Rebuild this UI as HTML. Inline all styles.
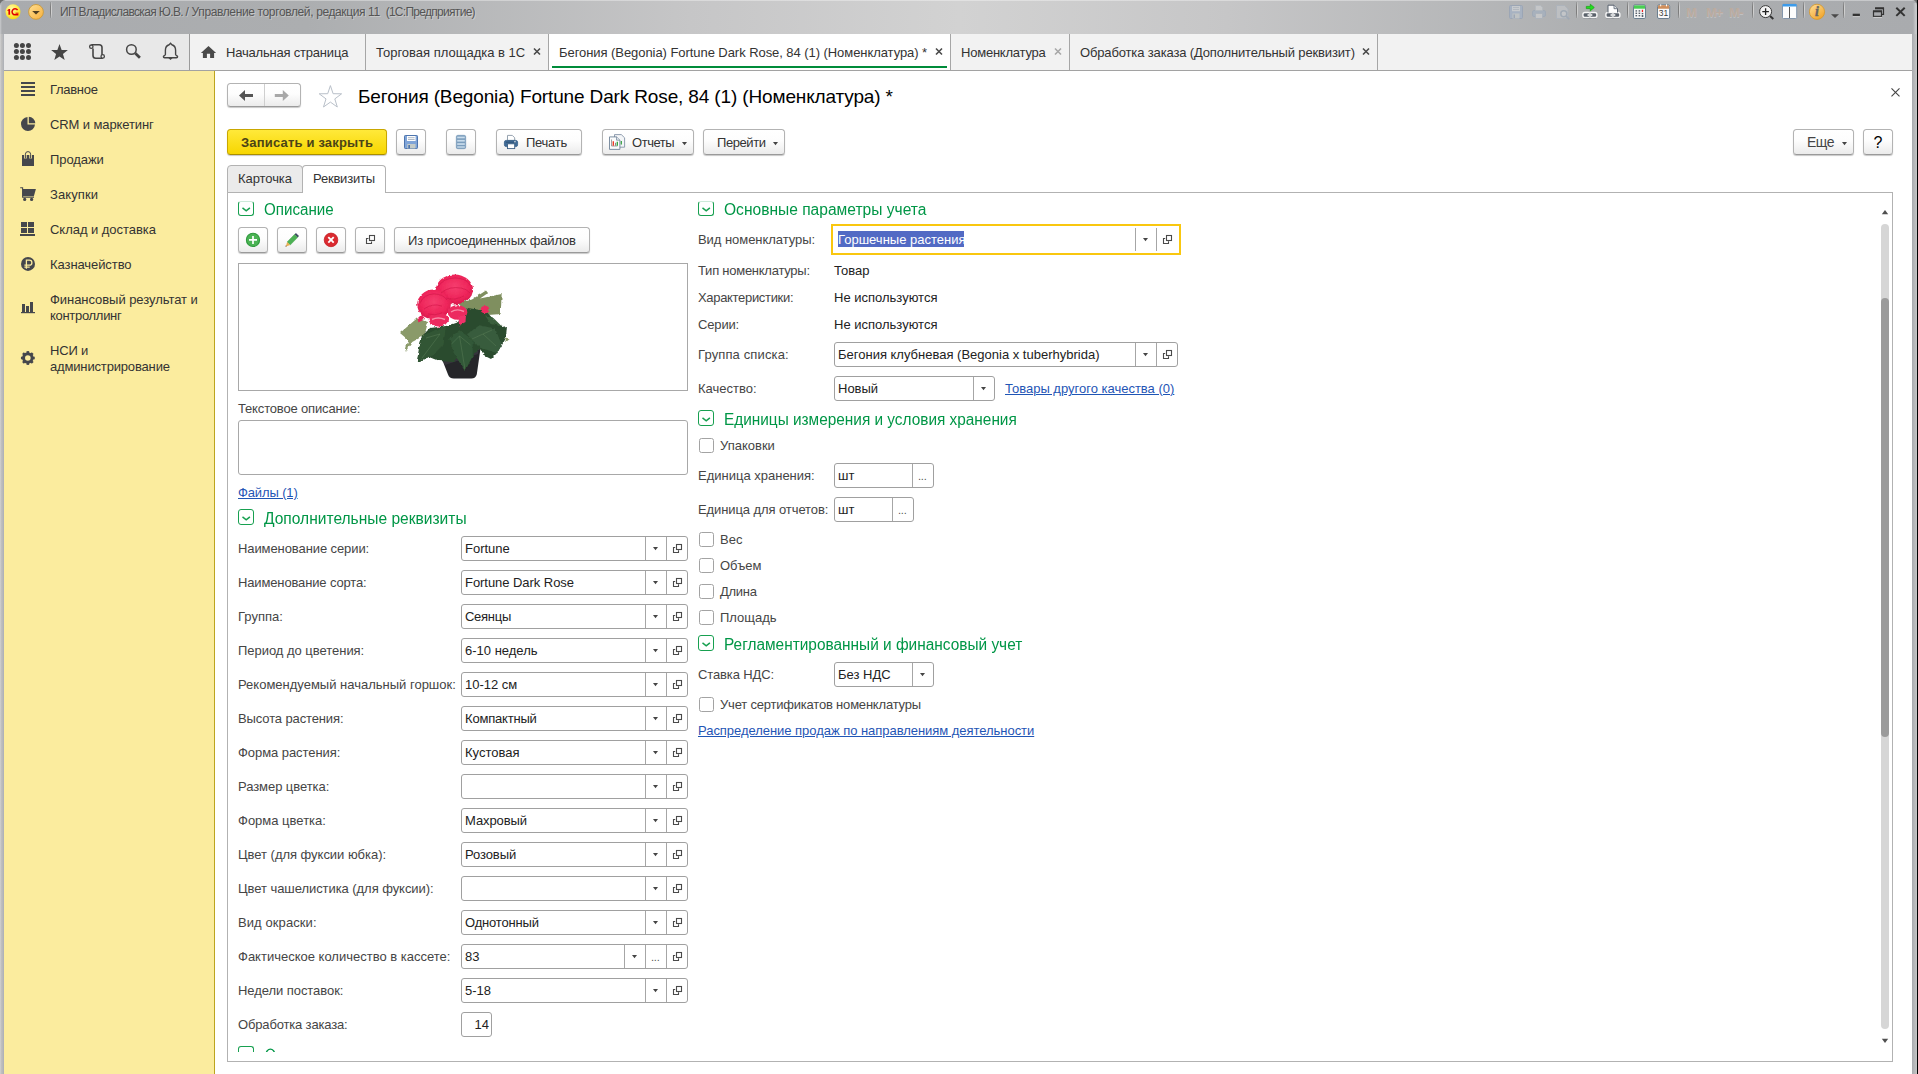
<!DOCTYPE html><html><head><meta charset="utf-8"><title>1C</title><style>
*{box-sizing:border-box;margin:0;padding:0}
html,body{width:1918px;height:1074px;overflow:hidden;background:#fff}
body{font-family:"Liberation Sans",sans-serif;font-size:13px;color:#333;position:relative}
.a{position:absolute}
svg{position:absolute;overflow:visible}
.t{position:absolute;white-space:nowrap;line-height:16px;height:16px}
#title{left:0;top:0;width:1918px;height:34px;background:linear-gradient(90deg,#a9abae 0%,#acaeb0 16%,#c6c6c7 36%,#d2d2d2 50%,#c6c6c7 64%,#acaeb0 84%,#a9abae 100%)}
#tabbar{left:4px;top:34px;width:1908px;height:36px;background:#f2f2f2}
#tools{left:4px;top:34px;width:185px;height:36px;background:#e8e8e8}
#side{left:4px;top:71px;width:210px;height:1003px;background:#fbec9e}
.lbl{color:#454545}
.val{color:#222}
.hd{color:#009646;font-size:16px;line-height:18px;height:18px;transform-origin:0 0}
.lnk{color:#1f55b5;text-decoration:underline}
.btn{position:absolute;border:1px solid #b3b3b3;border-bottom-color:#9a9a9a;border-radius:3.5px;background:linear-gradient(#ffffff 0%,#fdfdfd 45%,#ebebeb 100%);box-shadow:0 1px 1px rgba(0,0,0,.22)}
.fld{position:absolute;border:1px solid #a0a0a0;border-radius:3px;background:#fff;height:25px}
.fld i{position:absolute;top:0;width:1px;height:23px;background:#a6a6a6}
.cb{position:absolute;width:15px;height:15px;border:1px solid #a3a3a3;border-radius:2.5px;background:#fff}
.nav{font-size:13px;color:#333}
</style></head><body>
<div class="a" id="title"></div>
<div class="a" style="left:0;top:0;width:1918px;height:1px;background:rgba(255,255,255,.35)"></div>
<div class="t " style="left:60px;top:4px;font-size:12px;color:#555;text-shadow:1px 1px 0 rgba(255,255,255,.3)"><span style="letter-spacing:-0.657px">ИП Владиславская Ю.В. </span><span style="letter-spacing:-0.367px">/ Управление торговлей, </span><span style="letter-spacing:-0.39px">редакция 11&nbsp; </span><span style="letter-spacing:-0.71px">(1С:Предприятие)</span></div>
<svg style="left:4px;top:2px" width="44" height="20" viewBox="4 2 44 20" >
<defs><radialGradient id="g1" cx=".4" cy=".3" r=".8"><stop offset="0" stop-color="#fff9a8"/><stop offset=".6" stop-color="#ffe93a"/><stop offset="1" stop-color="#f3d400"/></radialGradient>
<linearGradient id="g2" x1="0" y1="0" x2="1" y2="1"><stop offset="0" stop-color="#ffdf92"/><stop offset="1" stop-color="#f7b03c"/></linearGradient></defs>
<circle cx="13" cy="11.8" r="7.5" fill="url(#g1)"/>
<path d="M7.3 10.2l1.6-1.2h1.2v5.8h-1.7v-4h-1.1z" fill="#e00000"/>
<path d="M18.4 14.8h-3.4a3 3 0 1 1 2.6-4.6" fill="none" stroke="#e00000" stroke-width="1.5"/>
<path d="M15.5 13.2h3" stroke="#e00000" stroke-width="1"/>
<circle cx="36" cy="11.9" r="7.4" fill="url(#g2)" stroke="#c9993a" stroke-width=".9"/>
<path d="M32.2 11h7.6l-3.8 3.6z" fill="#4f3f22"/>
</svg>
<div class="a" style="left:50px;top:2px;width:1px;height:16px;background:linear-gradient(rgba(110,110,110,.3),#7d7d7d 30%,#7d7d7d 70%,rgba(110,110,110,.3))"></div>
<div class="a" style="left:51px;top:2px;width:1px;height:16px;background:linear-gradient(rgba(220,220,220,.2),#cfcfcf 30%,#cfcfcf 70%,rgba(220,220,220,.2))"></div>
<div class="a" style="left:1576px;top:2px;width:1px;height:16px;background:linear-gradient(rgba(110,110,110,.3),#7d7d7d 30%,#7d7d7d 70%,rgba(110,110,110,.3))"></div>
<div class="a" style="left:1577px;top:2px;width:1px;height:16px;background:linear-gradient(rgba(220,220,220,.2),#cfcfcf 30%,#cfcfcf 70%,rgba(220,220,220,.2))"></div>
<div class="a" style="left:1627px;top:2px;width:1px;height:16px;background:linear-gradient(rgba(110,110,110,.3),#7d7d7d 30%,#7d7d7d 70%,rgba(110,110,110,.3))"></div>
<div class="a" style="left:1628px;top:2px;width:1px;height:16px;background:linear-gradient(rgba(220,220,220,.2),#cfcfcf 30%,#cfcfcf 70%,rgba(220,220,220,.2))"></div>
<div class="a" style="left:1678px;top:2px;width:1px;height:16px;background:linear-gradient(rgba(110,110,110,.3),#7d7d7d 30%,#7d7d7d 70%,rgba(110,110,110,.3))"></div>
<div class="a" style="left:1679px;top:2px;width:1px;height:16px;background:linear-gradient(rgba(220,220,220,.2),#cfcfcf 30%,#cfcfcf 70%,rgba(220,220,220,.2))"></div>
<div class="a" style="left:1752px;top:2px;width:1px;height:16px;background:linear-gradient(rgba(110,110,110,.3),#7d7d7d 30%,#7d7d7d 70%,rgba(110,110,110,.3))"></div>
<div class="a" style="left:1753px;top:2px;width:1px;height:16px;background:linear-gradient(rgba(220,220,220,.2),#cfcfcf 30%,#cfcfcf 70%,rgba(220,220,220,.2))"></div>
<div class="a" style="left:1803px;top:2px;width:1px;height:16px;background:linear-gradient(rgba(110,110,110,.3),#7d7d7d 30%,#7d7d7d 70%,rgba(110,110,110,.3))"></div>
<div class="a" style="left:1804px;top:2px;width:1px;height:16px;background:linear-gradient(rgba(220,220,220,.2),#cfcfcf 30%,#cfcfcf 70%,rgba(220,220,220,.2))"></div>
<div class="a" style="left:1843px;top:2px;width:1px;height:16px;background:linear-gradient(rgba(110,110,110,.3),#7d7d7d 30%,#7d7d7d 70%,rgba(110,110,110,.3))"></div>
<div class="a" style="left:1844px;top:2px;width:1px;height:16px;background:linear-gradient(rgba(220,220,220,.2),#cfcfcf 30%,#cfcfcf 70%,rgba(220,220,220,.2))"></div>
<svg style="left:1509px;top:5px" width="62" height="14" viewBox="1509 5 62 14" >
<g opacity=".55">
<rect x="1509.5" y="5.5" width="13" height="13" rx="1" fill="#9fb2cc" stroke="#8a9bb5"/>
<rect x="1512" y="6" width="8" height="5.2" fill="#d9dde2"/><path d="M1513 7.5h6M1513 9.5h6" stroke="#aab4c2" stroke-width=".8"/>
<rect x="1512.5" y="13.5" width="7" height="5" fill="#c9cfd0"/><rect x="1513.5" y="14.5" width="1.5" height="3.5" fill="#8a9bb5"/>
<rect x="1532.5" y="10.5" width="13" height="6" rx="1.5" fill="#9fb0c4" stroke="#93a3b8"/>
<path d="M1535.5 10.5v-5h5l2 2v3z" fill="#d6d8da" stroke="#b4bcc6" stroke-width=".8"/>
<rect x="1535.5" y="13.5" width="7" height="5" fill="#d6d8da" stroke="#a5b1c0" stroke-width=".8"/>
<path d="M1556.5 5.500h8l3.500 3.500v9.500h-11.500z" fill="#c9ccd0" stroke="#a9b4c3" stroke-width=".9"/>
<circle cx="1563.800" cy="13.700" r="3" fill="#d4d7da" stroke="#94a4b6" stroke-width="1.500"/>
<path d="M1566 16l3.300 3.300" stroke="#94a4b6" stroke-width="1.800"/>
</g></svg>
<svg style="left:1582px;top:4px" width="40" height="16" viewBox="1582 4 40 16" ><rect x="1582.9" y="12.500" width="7" height="5" rx="2" fill="#5b626b" stroke="#f6f6f6" stroke-width="1.400"/>
<rect x="1589.9" y="12.500" width="7" height="5" rx="2" fill="#5b626b" stroke="#f6f6f6" stroke-width="1.400"/>
<rect x="1587.2" y="14" width="5.400" height="2" rx=".8" fill="#fff" stroke="#5b626b" stroke-width=".5"/><path d="M1583.5 18.500h12.600" stroke="#70767d" stroke-width=".7" opacity=".6"/>
<path d="M1586.300 6.400h4v-2.200l4 3.300-4 3.300v-2.200h-4z" fill="#22e01e" stroke="#12a010" stroke-width=".7"/>
<rect x="1605.9" y="12.500" width="7" height="5" rx="2" fill="#5b626b" stroke="#f6f6f6" stroke-width="1.400"/>
<rect x="1612.9" y="12.500" width="7" height="5" rx="2" fill="#5b626b" stroke="#f6f6f6" stroke-width="1.400"/>
<rect x="1610.2" y="14" width="5.400" height="2" rx=".8" fill="#fff" stroke="#5b626b" stroke-width=".5"/><path d="M1606.5 18.500h12.600" stroke="#70767d" stroke-width=".7" opacity=".6"/>
<path d="M1608 12.500v-7.300h6l3.500 3.500v3.800" fill="#fdfdfd" stroke="#59626e" stroke-width="1"/><path d="M1614 5.200v3.500h3.500" fill="#dfe3e8" stroke="#59626e" stroke-width=".8"/>
</svg>
<svg style="left:1633px;top:4px" width="40" height="16" viewBox="1633 4 40 16" >
<rect x="1633.5" y="4.900" width="12" height="13.600" rx="1.300" fill="#f6f7f8" stroke="#6c7f90"/>
<rect x="1634" y="5.400" width="11" height="3.300" fill="#49cf52"/>
<g fill="#58606a"><rect x="1635.500" y="10.200" width="1.600" height="1.400"/><rect x="1638.600" y="10.200" width="1.600" height="1.400"/>
<rect x="1635.500" y="12.600" width="1.600" height="1.400"/><rect x="1638.600" y="12.600" width="1.600" height="1.400"/><rect x="1641.700" y="12.900" width="1.600" height="1.400"/>
<rect x="1635.500" y="15" width="1.600" height="1.400"/><rect x="1638.600" y="15" width="1.600" height="1.400"/><rect x="1641.700" y="15" width="1.600" height="2"/></g>
<rect x="1641.800" y="9.800" width="1.300" height="2.200" fill="#f02020"/>
<rect x="1657.500" y="4.900" width="12.200" height="13.600" rx="1.500" fill="#fbfbfc" stroke="#6c7f90"/>
<path d="M1658 8.800v-2.400a1.200 1.200 0 0 1 1.200-1.200h8.800a1.200 1.200 0 0 1 1.200 1.200v2.400z" fill="#cf8e5c"/>
<path d="M1660.700 4.300v2M1666.500 4.300v2" stroke="#fff" stroke-width="1"/>
<text x="1663.600" y="16.400" font-family="Liberation Sans" font-size="8.500" text-anchor="middle" fill="#3d3d3d">31</text>
</svg>
<div class="t " style="left:1686px;top:5px;font-size:13px;font-weight:bold;color:#bbab9f;letter-spacing:-0.5px;text-shadow:0 1px 0 rgba(255,255,255,.25)">M</div>
<div class="t " style="left:1706px;top:5px;font-size:13px;font-weight:bold;color:#bbab9f;letter-spacing:-1px;text-shadow:0 1px 0 rgba(255,255,255,.25)">M+</div>
<div class="t " style="left:1729px;top:5px;font-size:13px;font-weight:bold;color:#bbab9f;letter-spacing:-0.5px;text-shadow:0 1px 0 rgba(255,255,255,.25)">M-</div>
<svg style="left:1758px;top:3px" width="90" height="18" viewBox="1758 3 90 18" >
<defs><linearGradient id="g3" x1="0" y1="0" x2=".7" y2="1"><stop offset="0" stop-color="#ffe09a"/><stop offset="1" stop-color="#f1a52c"/></linearGradient></defs>
<path d="M1770 16l3.300 3" stroke="#333" stroke-width="2"/>
<circle cx="1765.600" cy="11.600" r="6" fill="#f4f4f4" stroke="#3a3a3a" stroke-width="1"/>
<path d="M1762.300 11.600h6.600M1765.600 8.300v6.600" stroke="#222" stroke-width="1.300"/>
<rect x="1782.500" y="4.300" width="14.200" height="14.200" rx="1" fill="#fcfcfc" stroke="#7a8fa6" stroke-width=".9"/>
<path d="M1782.500 6.600v-1.600a1 1 0 0 1 1-1h12.200a1 1 0 0 1 1 1v1.600z" fill="#3d9bea"/>
<path d="M1789.500 7v11" stroke="#555" stroke-width="1"/>
<circle cx="1817" cy="11.800" r="7.600" fill="url(#g3)" stroke="#d49a34" stroke-width=".9"/>
<text x="1817" y="16.400" font-family="Liberation Serif" font-style="italic" font-weight="bold" font-size="14" text-anchor="middle" fill="#666" stroke="#666" stroke-width=".4">i</text>
<path d="M1831 14.300h8l-4 3.600z" fill="#4a4a4a"/>
</svg>
<svg style="left:1850px;top:5px" width="60" height="14" viewBox="1850 5 60 14" >
<rect x="1852.700" y="13.700" width="7.200" height="2.400" fill="#333"/><rect x="1852.700" y="16.100" width="7.200" height="1" fill="#d8d8d8" opacity=".7"/>
<path d="M1875.500 8.400h8v6h-1.800" fill="none" stroke="#333" stroke-width="1.200"/><path d="M1875 8.300h9" stroke="#333" stroke-width="2"/>
<rect x="1873.500" y="11.400" width="8" height="5" fill="none" stroke="#333" stroke-width="1.200"/><path d="M1873 11.300h9" stroke="#333" stroke-width="2"/>
<path d="M1873.500 17.400h8.500" stroke="#e0e0e0" stroke-width=".9" opacity=".8"/>
<path d="M1896.300 7.700l8.400 8.200M1904.700 7.700l-8.400 8.200" stroke="#333" stroke-width="2"/>
</svg>
<div class="a" style="left:1913px;top:3px;width:4px;height:31px;background:linear-gradient(90deg,rgba(200,201,203,0),rgba(200,201,203,.9) 60%,rgba(200,201,203,.9))"></div>
<div class="a" style="left:0;top:3px;width:2px;height:31px;background:linear-gradient(90deg,rgba(205,206,208,.9),rgba(205,206,208,0))"></div>
<svg style="left:0px;top:0px" width="6" height="6" viewBox="0 0 6 6" ><path d="M0 0h5.500a5.500 5.500 0 0 0-5.500 5.500z" fill="#6e6e6e"/></svg>
<svg style="left:1911px;top:0px" width="7" height="6" viewBox="1911 0 7 6" ><path d="M1917 0h-5a5 5 0 0 1 5 5z" fill="#6e6e6e"/></svg>
<div class="a" id="tabbar"></div><div class="a" id="tools"></div>
<div class="a" style="left:189px;top:34px;width:1px;height:37px;background:#9b9b9b"></div>
<div class="a" style="left:365px;top:34px;width:1px;height:36px;background:#a6a6a6"></div>
<div class="a" style="left:548px;top:34px;width:1px;height:36px;background:#a6a6a6"></div>
<div class="a" style="left:950px;top:34px;width:1px;height:36px;background:#a6a6a6"></div>
<div class="a" style="left:1069px;top:34px;width:1px;height:36px;background:#a6a6a6"></div>
<div class="a" style="left:1377px;top:34px;width:1px;height:36px;background:#a6a6a6"></div>
<div class="a" style="left:549px;top:34px;width:401px;height:36px;background:#fff"></div>
<div class="a" style="left:552px;top:66px;width:395px;height:2px;background:#008c3a"></div>
<div class="a" style="left:4px;top:70px;width:1908px;height:1px;background:#a2a2a2"></div>
<div class="t " style="left:226px;top:45px;letter-spacing:-0.2px;color:#333">Начальная страница</div>
<div class="t " style="left:376px;top:45px;color:#333">Торговая площадка в 1С</div>
<div class="t " style="left:559px;top:45px;letter-spacing:-0.06px;color:#333">Бегония (Begonia) Fortune Dark Rose, 84 (1) (Номенклатура) *</div>
<div class="t " style="left:961px;top:45px;color:#333;letter-spacing:-0.22px">Номенклатура</div>
<div class="t " style="left:1080px;top:45px;color:#333;letter-spacing:-0.145px">Обработка заказа (Дополнительный реквизит)</div>
<svg style="left:531.5px;top:47px" width="10" height="10" viewBox="531.5 47 10 10" ><path d="M533.5 48.500l6 6M539.5 48.500l-6 6" stroke="#4a4a4a" stroke-width="1.600"/></svg>
<svg style="left:933.5px;top:47px" width="10" height="10" viewBox="933.5 47 10 10" ><path d="M935.5 48.500l6 6M941.5 48.500l-6 6" stroke="#4a4a4a" stroke-width="1.600"/></svg>
<svg style="left:1052.5px;top:47px" width="10" height="10" viewBox="1052.5 47 10 10" ><path d="M1054.5 48.500l6 6M1060.5 48.500l-6 6" stroke="#a8a8a8" stroke-width="1.600"/></svg>
<svg style="left:1360.5px;top:47px" width="10" height="10" viewBox="1360.5 47 10 10" ><path d="M1362.5 48.500l6 6M1368.5 48.500l-6 6" stroke="#4a4a4a" stroke-width="1.600"/></svg>
<svg style="left:12px;top:42px" width="180" height="20" viewBox="12 42 180 20" ><g fill="#454545"><circle cx="16.4" cy="45.6" r="2.500"/><circle cx="16.4" cy="51.6" r="2.500"/><circle cx="16.4" cy="57.6" r="2.500"/><circle cx="22.4" cy="45.6" r="2.500"/><circle cx="22.4" cy="51.6" r="2.500"/><circle cx="22.4" cy="57.6" r="2.500"/><circle cx="28.5" cy="45.6" r="2.500"/><circle cx="28.5" cy="51.6" r="2.500"/><circle cx="28.5" cy="57.6" r="2.500"/></g>
<path d="M59.500 44l2.150 5.900 6.250.200-4.950 3.850 1.750 6.050-5.200-3.500-5.200 3.500 1.750-6.050-4.950-3.850 6.250-.200z" fill="#454545"/>
<path d="M91.400 44.700h7.800a2.800 2.800 0 0 1 2.800 2.800v7.200M93 48.500v7a2.800 2.800 0 0 0 2.800 2.800h7" fill="none" stroke="#454545" stroke-width="1.600"/>
<circle cx="91.300" cy="46.700" r="1.700" fill="#e8e8e8" stroke="#454545" stroke-width="1.300"/><circle cx="102.700" cy="56.400" r="1.700" fill="#e8e8e8" stroke="#454545" stroke-width="1.300"/>
<circle cx="131.400" cy="49.500" r="4.800" fill="none" stroke="#454545" stroke-width="1.500"/><path d="M135.300 53.300l4.600 4.400" stroke="#454545" stroke-width="2.800"/>
<path d="M170.500 43.200l1.300 1.500c2.600.700 3.800 2.900 3.800 5.500v4.300c0 1 2 1.300 2 2.300 0 .600-.500.900-1.200.900h-11.800c-.700 0-1.200-.300-1.200-.900 0-1 2-1.300 2-2.300v-4.300c0-2.600 1.200-4.800 3.800-5.500z" fill="none" stroke="#454545" stroke-width="1.400"/>
<path d="M168.400 58l2.100 2 2.100-2z" fill="#454545"/>
</svg>
<svg style="left:200px;top:45px" width="17" height="14" viewBox="200 45 17 14" ><path d="M208.500 45.900l7.600 7.100h-2v5.100h-4v-4.300h-3.200v4.300h-4v-5.100h-2z" fill="#4a4a4a"/></svg>
<div class="a" id="side"></div>
<div class="a" style="left:214px;top:71px;width:1px;height:1003px;background:#bca41f"></div>
<div class="t nav" style="left:50px;top:82px;height:auto"><span style="letter-spacing:-0.3px">Главное</span></div>
<div class="t nav" style="left:50px;top:117px;height:auto"><span style="letter-spacing:-0.1px">CRM и маркетинг</span></div>
<div class="t nav" style="left:50px;top:152px;height:auto"><span style="letter-spacing:-0.09px">Продажи</span></div>
<div class="t nav" style="left:50px;top:187px;height:auto"><span style="letter-spacing:0.09px">Закупки</span></div>
<div class="t nav" style="left:50px;top:222px;height:auto"><span style="letter-spacing:-0.04px">Склад и доставка</span></div>
<div class="t nav" style="left:50px;top:257px;height:auto"><span style="letter-spacing:-0.08px">Казначейство</span></div>
<div class="t nav" style="left:50px;top:292px;height:auto"><span style="letter-spacing:-0.05px">Финансовый результат и</span><br><span style="letter-spacing:-0.3px">контроллинг</span></div>
<div class="t nav" style="left:50px;top:343px;height:auto"><span style="letter-spacing:-0.2px">НСИ и</span><br><span style="letter-spacing:-0.16px">администрирование</span></div>
<svg style="left:20px;top:80px" width="16" height="290" viewBox="20 80 16 290" ><g fill="#45474c">
<rect x="21" y="82" width="14" height="2"/><rect x="21" y="86" width="14" height="2"/><rect x="21" y="90" width="14" height="2"/><rect x="21" y="94" width="14" height="2"/>
<path d="M27.500 117v7.500h7.500a7 7 0 1 1-7.500-7.500z"/><path d="M28.800 116.700a6.700 6.700 0 0 1 6.500 6.500h-6.500z"/>
<rect x="22" y="155" width="12" height="11"/>
<rect x="21" y="222" width="6" height="5"/><rect x="28" y="222" width="6" height="5"/><rect x="21" y="228" width="6" height="5"/><rect x="28" y="228" width="6" height="5"/><rect x="20" y="234" width="15" height="2"/>
<circle cx="28" cy="263.900" r="7"/>
<rect x="22" y="304" width="3" height="9"/><rect x="26" y="306" width="3" height="7"/><rect x="30" y="302" width="3" height="11"/><rect x="21" y="312" width="14" height="1.200"/>
<path d="M35.900 189h-13.300v7h11.300z"/><circle cx="24.700" cy="199.400" r="1.600"/><circle cx="31.600" cy="199.400" r="1.600"/>
</g>
<path d="M25.400 158.500v-4.300a2.600 2.600 0 0 1 5.200 0v4.300" fill="none" stroke="#fbec9e" stroke-width="2.600"/>
<path d="M25.400 158v-3.800a2.600 2.600 0 0 1 5.200 0v3.800" fill="none" stroke="#45474c" stroke-width="1" stroke-linecap="round"/>
<path d="M20.200 187.700h2.400v9.400h11.400" fill="none" stroke="#45474c" stroke-width="1.100"/>
<path d="M26.400 268.800v-8.600h3a2.500 2.500 0 0 1 0 5h-5M24.400 267.100h5.300" fill="none" stroke="#fbec9e" stroke-width="1.300"/>
<circle cx="27.850" cy="358" r="4.300" fill="none" stroke="#45474c" stroke-width="3"/>
<g stroke="#45474c" stroke-width="2.600"><path d="M27.850 351.100v2.500" transform="rotate(0 27.850 358)"/><path d="M27.850 351.100v2.500" transform="rotate(45 27.850 358)"/><path d="M27.850 351.100v2.500" transform="rotate(90 27.850 358)"/><path d="M27.850 351.100v2.500" transform="rotate(135 27.850 358)"/><path d="M27.850 351.100v2.500" transform="rotate(180 27.850 358)"/><path d="M27.850 351.100v2.500" transform="rotate(225 27.850 358)"/><path d="M27.850 351.100v2.500" transform="rotate(270 27.850 358)"/><path d="M27.850 351.100v2.500" transform="rotate(315 27.850 358)"/></g></svg>
<div class="t " style="left:358px;top:85px;font-size:19px;line-height:24px;height:24px;color:#000;letter-spacing:-0.14px">Бегония (Begonia) Fortune Dark Rose, 84 (1) (Номенклатура) *</div>
<div class="btn" style="left:227px;top:83px;width:74px;height:24px"></div>
<div class="a" style="left:264px;top:84px;width:1px;height:22px;background:#cfcfcf"></div>
<svg style="left:236px;top:88px" width="56" height="16" viewBox="236 88 56 16" ><path d="M239 95.500l6-5.500v4h8v3h-8v4z" fill="#555"/><path d="M288.800 95.500l-6-5.500v4h-8v3h8v4z" fill="#a8a8a8"/></svg>
<svg style="left:318px;top:84px" width="26" height="24" viewBox="318 84 26 24" ><path d="M330.400 85.600l2.700 8.100 8.500.100-6.800 5.100 2.500 8.100-6.900-4.900-6.900 4.900 2.500-8.100-6.800-5.100 8.500-.100z" fill="#fff" stroke="#b9c0c9" stroke-width="1"/></svg>
<svg style="left:1889px;top:87px" width="12" height="12" viewBox="1889 87 12 12" ><path d="M1891.500 88.300l8 8M1899.500 88.300l-8 8" stroke="#444" stroke-width="1.100"/></svg>
<div class="btn" style="left:227px;top:129px;width:160px;height:26px;border-color:#c9a700;border-bottom-color:#a98e00;background:linear-gradient(#ffe93a,#f7d600)"></div>
<div class="t " style="left:241px;top:135px;font-weight:bold;color:#4b4416;letter-spacing:0.18px">Записать и закрыть</div>
<div class="btn" style="left:396px;top:129px;width:30px;height:26px"></div>
<div class="btn" style="left:446px;top:129px;width:30px;height:26px"></div>
<div class="btn" style="left:496px;top:129px;width:86px;height:26px"></div>
<div class="btn" style="left:602px;top:129px;width:92px;height:26px"></div>
<div class="btn" style="left:703px;top:129px;width:82px;height:26px"></div>
<div class="btn" style="left:1793px;top:129px;width:61px;height:26px"></div>
<div class="btn" style="left:1863px;top:129px;width:30px;height:26px"></div>
<div class="t " style="left:526px;top:135px;letter-spacing:-0.27px">Печать</div>
<div class="t " style="left:632px;top:135px;letter-spacing:-0.47px">Отчеты</div>
<div class="t " style="left:717px;top:135px;letter-spacing:-0.43px">Перейти</div>
<div class="t " style="left:1807px;top:134px;font-size:14px;letter-spacing:-0.5px;color:#444">Еще</div>
<div class="t " style="left:1873.5px;top:134px;font-size:16px;color:#000;line-height:18px;height:18px">?</div>
<svg style="left:682px;top:142px" width="5" height="4" viewBox="682 142 5 4" ><path d="M682 142h5l-2.500 3.200z" fill="#444"/></svg>
<svg style="left:773px;top:142px" width="5" height="4" viewBox="773 142 5 4" ><path d="M773 142h5l-2.500 3.200z" fill="#444"/></svg>
<svg style="left:1842px;top:142px" width="5" height="4" viewBox="1842 142 5 4" ><path d="M1842 142h5l-2.500 3.200z" fill="#444"/></svg>
<svg style="left:404px;top:135px" width="14" height="14" viewBox="404 135 14 14" ><rect x="404.500" y="135.500" width="13" height="13" rx=".8" fill="#7fa4d8" stroke="#4d74ad"/>
<rect x="407" y="136" width="8.600" height="5" fill="#fdfdfd"/><path d="M408 137.700h6.600M408 139.500h6.600" stroke="#9aa7b8" stroke-width=".8"/>
<rect x="407.300" y="144" width="8.200" height="4.500" fill="#c4cbc8"/><rect x="408.300" y="145" width="1.700" height="3.500" fill="#4d74ad"/></svg>
<svg style="left:456px;top:135px" width="10" height="14" viewBox="456 135 10 14" ><rect x="456.300" y="135.300" width="9.400" height="13.400" rx="1.500" fill="#7b9dbd" stroke="#6f92b4" stroke-width=".6"/>
<g fill="#c9dcec"><rect x="457.200" y="136.600" width="7.600" height="1.700"/><rect x="457.200" y="139.900" width="7.600" height="1.700"/><rect x="457.200" y="143.200" width="7.600" height="1.700"/><rect x="457.200" y="146.300" width="7.600" height="1.400"/></g></svg>
<svg style="left:504px;top:135px" width="14" height="14" viewBox="504 135 14 14" ><path d="M507.500 140.500v-5.100h4.800l2.400 2.400v2.700z" fill="#fff" stroke="#8a97a6" stroke-width=".9"/>
<rect x="504.400" y="140.400" width="13.200" height="6.200" rx="1.800" fill="#3f6b97" stroke="#355d86" stroke-width=".8"/>
<path d="M506 142.200h10" stroke="#2c4f73" stroke-width=".9"/><rect x="514.200" y="141.300" width="1.500" height="1" fill="#fff"/>
<rect x="507.500" y="143.800" width="7.200" height="4.800" fill="#fff" stroke="#3c5f84" stroke-width=".9"/></svg>
<svg style="left:608px;top:134px" width="18" height="16" viewBox="608 134 18 16" ><path d="M614.500 134.600h6.800l3.300 3.200v9.400h-10.100z" fill="#f4f6f8" stroke="#8393a6" stroke-width=".9"/>
<path d="M621.300 141v3.500" stroke="#3aa544" stroke-width="1.300"/>
<path d="M609.500 136.900h7l3.400 3.300v9.200h-10.400z" fill="#fbfcfd" stroke="#6f8297" stroke-width=".9"/><path d="M616.500 136.900v3.300h3.400" fill="#dfe5ec" stroke="#6f8297" stroke-width=".7"/>
<path d="M611.500 139.500v6.500h6" fill="none" stroke="#8c8c8c" stroke-width=".8"/>
<path d="M613.300 141.200v4.500" stroke="#ee3a24" stroke-width="1.400"/><path d="M615.500 142.800v3" stroke="#888" stroke-width="1"/><path d="M617.300 141.800v4" stroke="#37a844" stroke-width="1.400"/></svg>
<div class="a" style="left:227px;top:192px;width:1666px;height:870px;border:1px solid #b2b2b2"></div>
<div class="a" style="left:227px;top:165px;width:76px;height:28px;border:1px solid #b2b2b2;border-radius:4px 4px 0 0;background:#ebebeb"></div>
<div class="a" style="left:302px;top:165px;width:84px;height:28px;border:1px solid #b2b2b2;border-bottom:none;border-radius:4px 4px 0 0;background:#fff"></div>
<div class="t " style="left:238px;top:171px;color:#333;letter-spacing:-0.07px">Карточка</div>
<div class="t " style="left:313px;top:171px;color:#333;letter-spacing:-0.2px">Реквизиты</div>
<div class="a" style="left:238px;width:16px;height:16px;border:1px solid #17a050;border-radius:3px;border-top-color:rgba(23,160,80,.22);height:15px;top:201px"></div>
<svg style="left:238px;top:201px" width="16" height="16" viewBox="238 201 16 16" ><path d="M242.5 207.9L246.2 210.9L249.9 207.9" fill="none" stroke="#17a050" stroke-width="1.500"/></svg>
<div class="t hd" style="left:264px;top:201px;transform:scaleX(0.946)">Описание</div>
<div class="a" style="left:238px;width:16px;height:16px;border:1px solid #17a050;border-radius:3px;top:509px"></div>
<svg style="left:238px;top:510px" width="16" height="16" viewBox="238 510 16 16" ><path d="M242.5 516.9L246.2 519.9L249.9 516.9" fill="none" stroke="#17a050" stroke-width="1.500"/></svg>
<div class="t hd" style="left:264px;top:510px;transform:scaleX(0.972)">Дополнительные реквизиты</div>
<div class="a" style="left:698px;width:16px;height:16px;border:1px solid #17a050;border-radius:3px;border-top-color:rgba(23,160,80,.22);height:15px;top:201px"></div>
<svg style="left:698px;top:201px" width="16" height="16" viewBox="698 201 16 16" ><path d="M702.5 207.9L706.2 210.9L709.9 207.9" fill="none" stroke="#17a050" stroke-width="1.500"/></svg>
<div class="t hd" style="left:724px;top:201px;transform:scaleX(0.973)">Основные параметры учета</div>
<div class="a" style="left:698px;width:16px;height:16px;border:1px solid #17a050;border-radius:3px;top:410px"></div>
<svg style="left:698px;top:411px" width="16" height="16" viewBox="698 411 16 16" ><path d="M702.5 417.9L706.2 420.9L709.9 417.9" fill="none" stroke="#17a050" stroke-width="1.500"/></svg>
<div class="t hd" style="left:724px;top:411px;transform:scaleX(0.9605)">Единицы измерения и условия хранения</div>
<div class="a" style="left:698px;width:16px;height:16px;border:1px solid #17a050;border-radius:3px;top:635px"></div>
<svg style="left:698px;top:636px" width="16" height="16" viewBox="698 636 16 16" ><path d="M702.5 642.9L706.2 645.9L709.9 642.9" fill="none" stroke="#17a050" stroke-width="1.500"/></svg>
<div class="t hd" style="left:724px;top:636px;transform:scaleX(0.963)">Регламентированный и финансовый учет</div>
<div class="btn" style="left:238px;top:227px;width:30px;height:26px"></div>
<div class="btn" style="left:277px;top:227px;width:30px;height:26px"></div>
<div class="btn" style="left:316px;top:227px;width:30px;height:26px"></div>
<div class="btn" style="left:355px;top:227px;width:30px;height:26px"></div>
<div class="btn" style="left:394px;top:227px;width:196px;height:26px"></div>
<div class="t " style="left:408px;top:233px;letter-spacing:-0.15px">Из присоединенных файлов</div>
<svg style="left:245px;top:232px" width="140" height="16" viewBox="245 232 140 16" ><circle cx="253" cy="239.900" r="6.600" fill="#4bb354" stroke="#2f9a3d" stroke-width="1.100"/><path d="M249 239.900h8M253 235.900v8" stroke="#fff" stroke-width="1.700"/>
<path d="M294.440 234.510l1.470-1.490 3.120 3.080-1.470 1.490z" fill="#414d63"/><path d="M287.090 241.960l7.350-7.450 3.120 3.080-7.350 7.450z" fill="#4db154" stroke="#3c9c44" stroke-width=".4"/>
<path d="M287.090 241.960l3.120 3.080-4.300 1.500z" fill="#e9ae4f"/><path d="M285.400 246.800l.5-1.500 1 1z" fill="#5a4636"/>
<circle cx="331" cy="239.900" r="6.800" fill="#da2a30" stroke="#c41e25" stroke-width=".8"/><path d="M328.300 237.200l5.400 5.400M333.700 237.200l-5.400 5.400" stroke="#fff" stroke-width="1.900"/>
<rect x="369.500" y="235.500" width="5" height="5" fill="none" stroke="#4a4a4a" stroke-width="1.100"/><path d="M368.500 238.500h-2v5h5v-2" fill="none" stroke="#4a4a4a" stroke-width="1.100"/></svg>
<div class="a" style="left:238px;top:263px;width:450px;height:128px;border:1px solid #a8a8a8"></div>
<svg style="left:398px;top:270px" width="116" height="112" viewBox="398 270 116 112" >
<defs><filter id="bl" x="-8%" y="-8%" width="116%" height="116%"><feTurbulence type="fractalNoise" baseFrequency=".22" numOctaves="2" seed="7" result="n"/><feDisplacementMap in="SourceGraphic" in2="n" scale="3.200" xChannelSelector="R" yChannelSelector="G"/><feGaussianBlur stdDeviation="0.5"/></filter>
<filter id="b2"><feGaussianBlur stdDeviation="0.5"/></filter>
<radialGradient id="fp" cx=".5" cy=".42" r=".62"><stop offset="0" stop-color="#f53d6e"/><stop offset=".65" stop-color="#ee255a"/><stop offset="1" stop-color="#d5164a"/></radialGradient></defs>
<g filter="url(#b2)">
<path d="M442.500 360.500l38-12-3.700 25.800q-1 4.200-5.500 4.200h-17.500q-4.500 0-5.800-4z" fill="#26272b"/>
<path d="M445 365l33-11 .5-3.500-35.500 11z" fill="#45464c" opacity=".5"/>
</g>
<g filter="url(#bl)">
<path d="M458 303.500l14-4 14-9 2 2.500-8 5.500 21.700-4.600-1.100 20.100-15.600 1.200-9.500-4.500-8 1.500z" fill="#7f8f5f"/>
<path d="M400 333l16.800-14.500 11.200 3.400-3.500 13.400-12.300 6.700-7 10 3-12z" fill="#8a9a6a"/>
<path d="M422 336l8-8 16-2 12-4 10-14 18 3 8 9 8 7 5-1-1 12-4 7-5 8-6 6-6-3-5-7-7 7-8 15-8-13-4 4-14-1-10-4-12 5 2-14z" fill="#2b4b2e"/>
<path d="M416.800 362l5.600-26.700 23.500-9-2.300 17.900-11.100 11.200z" fill="#315634"/>
<path d="M467 334.200l12.400-9 15.600 3.400 6.700 15.600-4.400 9-17.900-5.600z" fill="#375c3c"/>
<path d="M449.200 338.600l10.100-8.400 13.400 9.500v15.700l-7.800 15.600-12.300-20.100z" fill="#325837"/>
<path d="M485 315.200l8.900 3.300 7.800 7.800-11.100-2.200z" fill="#3a603c"/>
<path d="M506.200 337.500l3.900 1.100-5 4.500z" fill="#8b9b6b"/>
<ellipse cx="454.500" cy="289.500" rx="18.500" ry="15" fill="url(#fp)"/>
<ellipse cx="434" cy="304.500" rx="16.800" ry="15" fill="url(#fp)"/>
<path d="M417.500 318.500l4.500-4.500 3 5-6.500 3.500z" fill="#e8235a"/>
<ellipse cx="438.500" cy="319.500" rx="9.800" ry="7" fill="#ec2a5e"/>
<ellipse cx="457.500" cy="312.500" rx="9.800" ry="7.300" fill="#ec2a5e"/>
<path d="M458.500 317l7.500-2-.5 7-6.500 3.500z" fill="#f0336a"/>
<ellipse cx="485" cy="309.500" rx="4.200" ry="3.800" fill="#ec2a5e"/>
</g>
<g filter="url(#b2)" fill="none">
<path d="M438 287q5-9 17-9 11 0 15 7M441 293q8-7 20-5 6 1 9 5M446 298q8 3 18-2" stroke="#d01548" stroke-width=".9" opacity=".7"/>
<path d="M420 303q4-9 14-9 9 0 13 6M424 309q8-6 18-3M428 314q7 2 14-1" stroke="#d01548" stroke-width=".9" opacity=".7"/>
<path d="M432 319.500q6-3 13 0M451 312q6-4 13-.5" stroke="#f98aa6" stroke-width="1.400"/>
<path d="M459.500 336l5.400 33M459.500 336l-8 8M459.500 336l11 9M483 334l13 12M483 334l-11 5M483 334l9-4M440 334l-18 24M440 334l-14 4" stroke="#5d8259" stroke-width=".45"/>
</g></svg>
<div class="t lbl" style="left:238px;top:401px;letter-spacing:-0.16px">Текстовое описание:</div>
<div class="a" style="left:238px;top:420px;width:450px;height:55px;border:1px solid #a8a8a8;border-radius:3px"></div>
<div class="t lnk" style="left:238px;top:485px;letter-spacing:-0.13px">Файлы (1)</div>
<div class="t lbl" style="left:238px;top:541px;letter-spacing:-0.09px">Наименование серии:</div>
<div class="fld" style="left:461px;top:536px;width:227px;">
<i style="left:204px"></i>
<svg style="left:211px;top:7px" width="10" height="10"><rect x="3.500" y=".5" width="5" height="5" fill="none" stroke="#4a4a4a" stroke-width="1.100"/><path d="M2.200 3.500h-1.700v5h5v-2.300" fill="none" stroke="#4a4a4a" stroke-width="1.100"/></svg>
<i style="left:183px"></i>
<svg style="left:191px;top:10px" width="6" height="4"><path d="M0 0h5L2.500 3.200z" fill="#444"/></svg>
<div class="t val" style="left:3px;top:4px;letter-spacing:0px">Fortune</div>
</div>
<div class="t lbl" style="left:238px;top:575px;letter-spacing:-0.14px">Наименование сорта:</div>
<div class="fld" style="left:461px;top:570px;width:227px;">
<i style="left:204px"></i>
<svg style="left:211px;top:7px" width="10" height="10"><rect x="3.500" y=".5" width="5" height="5" fill="none" stroke="#4a4a4a" stroke-width="1.100"/><path d="M2.200 3.500h-1.700v5h5v-2.300" fill="none" stroke="#4a4a4a" stroke-width="1.100"/></svg>
<i style="left:183px"></i>
<svg style="left:191px;top:10px" width="6" height="4"><path d="M0 0h5L2.500 3.200z" fill="#444"/></svg>
<div class="t val" style="left:3px;top:4px;letter-spacing:-0.05px">Fortune Dark Rose</div>
</div>
<div class="t lbl" style="left:238px;top:609px;letter-spacing:0px">Группа:</div>
<div class="fld" style="left:461px;top:604px;width:227px;">
<i style="left:204px"></i>
<svg style="left:211px;top:7px" width="10" height="10"><rect x="3.500" y=".5" width="5" height="5" fill="none" stroke="#4a4a4a" stroke-width="1.100"/><path d="M2.200 3.500h-1.700v5h5v-2.300" fill="none" stroke="#4a4a4a" stroke-width="1.100"/></svg>
<i style="left:183px"></i>
<svg style="left:191px;top:10px" width="6" height="4"><path d="M0 0h5L2.500 3.200z" fill="#444"/></svg>
<div class="t val" style="left:3px;top:4px;letter-spacing:-0.27px">Сеянцы</div>
</div>
<div class="t lbl" style="left:238px;top:643px;letter-spacing:-0.03px">Период до цветения:</div>
<div class="fld" style="left:461px;top:638px;width:227px;">
<i style="left:204px"></i>
<svg style="left:211px;top:7px" width="10" height="10"><rect x="3.500" y=".5" width="5" height="5" fill="none" stroke="#4a4a4a" stroke-width="1.100"/><path d="M2.200 3.500h-1.700v5h5v-2.300" fill="none" stroke="#4a4a4a" stroke-width="1.100"/></svg>
<i style="left:183px"></i>
<svg style="left:191px;top:10px" width="6" height="4"><path d="M0 0h5L2.500 3.200z" fill="#444"/></svg>
<div class="t val" style="left:3px;top:4px;letter-spacing:0px">6-10 недель</div>
</div>
<div class="t lbl" style="left:238px;top:677px;letter-spacing:0px">Рекомендуемый начальный горшок:</div>
<div class="fld" style="left:461px;top:672px;width:227px;">
<i style="left:204px"></i>
<svg style="left:211px;top:7px" width="10" height="10"><rect x="3.500" y=".5" width="5" height="5" fill="none" stroke="#4a4a4a" stroke-width="1.100"/><path d="M2.200 3.500h-1.700v5h5v-2.300" fill="none" stroke="#4a4a4a" stroke-width="1.100"/></svg>
<i style="left:183px"></i>
<svg style="left:191px;top:10px" width="6" height="4"><path d="M0 0h5L2.500 3.200z" fill="#444"/></svg>
<div class="t val" style="left:3px;top:4px;letter-spacing:0px">10-12 см</div>
</div>
<div class="t lbl" style="left:238px;top:711px;letter-spacing:-0.12px">Высота растения:</div>
<div class="fld" style="left:461px;top:706px;width:227px;">
<i style="left:204px"></i>
<svg style="left:211px;top:7px" width="10" height="10"><rect x="3.500" y=".5" width="5" height="5" fill="none" stroke="#4a4a4a" stroke-width="1.100"/><path d="M2.200 3.500h-1.700v5h5v-2.300" fill="none" stroke="#4a4a4a" stroke-width="1.100"/></svg>
<i style="left:183px"></i>
<svg style="left:191px;top:10px" width="6" height="4"><path d="M0 0h5L2.500 3.200z" fill="#444"/></svg>
<div class="t val" style="left:3px;top:4px;letter-spacing:-0.19px">Компактный</div>
</div>
<div class="t lbl" style="left:238px;top:745px;letter-spacing:-0.06px">Форма растения:</div>
<div class="fld" style="left:461px;top:740px;width:227px;">
<i style="left:204px"></i>
<svg style="left:211px;top:7px" width="10" height="10"><rect x="3.500" y=".5" width="5" height="5" fill="none" stroke="#4a4a4a" stroke-width="1.100"/><path d="M2.200 3.500h-1.700v5h5v-2.300" fill="none" stroke="#4a4a4a" stroke-width="1.100"/></svg>
<i style="left:183px"></i>
<svg style="left:191px;top:10px" width="6" height="4"><path d="M0 0h5L2.500 3.200z" fill="#444"/></svg>
<div class="t val" style="left:3px;top:4px;letter-spacing:0px">Кустовая</div>
</div>
<div class="t lbl" style="left:238px;top:779px;letter-spacing:-0.06px">Размер цветка:</div>
<div class="fld" style="left:461px;top:774px;width:227px;">
<i style="left:204px"></i>
<svg style="left:211px;top:7px" width="10" height="10"><rect x="3.500" y=".5" width="5" height="5" fill="none" stroke="#4a4a4a" stroke-width="1.100"/><path d="M2.200 3.500h-1.700v5h5v-2.300" fill="none" stroke="#4a4a4a" stroke-width="1.100"/></svg>
<i style="left:183px"></i>
<svg style="left:191px;top:10px" width="6" height="4"><path d="M0 0h5L2.500 3.200z" fill="#444"/></svg>
</div>
<div class="t lbl" style="left:238px;top:813px;letter-spacing:0px">Форма цветка:</div>
<div class="fld" style="left:461px;top:808px;width:227px;">
<i style="left:204px"></i>
<svg style="left:211px;top:7px" width="10" height="10"><rect x="3.500" y=".5" width="5" height="5" fill="none" stroke="#4a4a4a" stroke-width="1.100"/><path d="M2.200 3.500h-1.700v5h5v-2.300" fill="none" stroke="#4a4a4a" stroke-width="1.100"/></svg>
<i style="left:183px"></i>
<svg style="left:191px;top:10px" width="6" height="4"><path d="M0 0h5L2.500 3.200z" fill="#444"/></svg>
<div class="t val" style="left:3px;top:4px;letter-spacing:-0.1px">Махровый</div>
</div>
<div class="t lbl" style="left:238px;top:847px;letter-spacing:-0.03px">Цвет (для фуксии юбка):</div>
<div class="fld" style="left:461px;top:842px;width:227px;">
<i style="left:204px"></i>
<svg style="left:211px;top:7px" width="10" height="10"><rect x="3.500" y=".5" width="5" height="5" fill="none" stroke="#4a4a4a" stroke-width="1.100"/><path d="M2.200 3.500h-1.700v5h5v-2.300" fill="none" stroke="#4a4a4a" stroke-width="1.100"/></svg>
<i style="left:183px"></i>
<svg style="left:191px;top:10px" width="6" height="4"><path d="M0 0h5L2.500 3.200z" fill="#444"/></svg>
<div class="t val" style="left:3px;top:4px;letter-spacing:-0.1px">Розовый</div>
</div>
<div class="t lbl" style="left:238px;top:881px;letter-spacing:-0.06px">Цвет чашелистика (для фуксии):</div>
<div class="fld" style="left:461px;top:876px;width:227px;">
<i style="left:204px"></i>
<svg style="left:211px;top:7px" width="10" height="10"><rect x="3.500" y=".5" width="5" height="5" fill="none" stroke="#4a4a4a" stroke-width="1.100"/><path d="M2.200 3.500h-1.700v5h5v-2.300" fill="none" stroke="#4a4a4a" stroke-width="1.100"/></svg>
<i style="left:183px"></i>
<svg style="left:191px;top:10px" width="6" height="4"><path d="M0 0h5L2.500 3.200z" fill="#444"/></svg>
</div>
<div class="t lbl" style="left:238px;top:915px;letter-spacing:0.09px">Вид окраски:</div>
<div class="fld" style="left:461px;top:910px;width:227px;">
<i style="left:204px"></i>
<svg style="left:211px;top:7px" width="10" height="10"><rect x="3.500" y=".5" width="5" height="5" fill="none" stroke="#4a4a4a" stroke-width="1.100"/><path d="M2.200 3.500h-1.700v5h5v-2.300" fill="none" stroke="#4a4a4a" stroke-width="1.100"/></svg>
<i style="left:183px"></i>
<svg style="left:191px;top:10px" width="6" height="4"><path d="M0 0h5L2.500 3.200z" fill="#444"/></svg>
<div class="t val" style="left:3px;top:4px;letter-spacing:-0.18px">Однотонный</div>
</div>
<div class="t lbl" style="left:238px;top:949px;letter-spacing:0px">Фактическое количество в кассете:</div>
<div class="fld" style="left:461px;top:944px;width:227px;">
<i style="left:204px"></i>
<svg style="left:211px;top:7px" width="10" height="10"><rect x="3.500" y=".5" width="5" height="5" fill="none" stroke="#4a4a4a" stroke-width="1.100"/><path d="M2.200 3.500h-1.700v5h5v-2.300" fill="none" stroke="#4a4a4a" stroke-width="1.100"/></svg>
<i style="left:183px"></i>
<div class="t" style="left:189px;top:4px;font-size:11px;color:#555;letter-spacing:-0.2px">...</div>
<i style="left:162px"></i>
<svg style="left:170px;top:10px" width="6" height="4"><path d="M0 0h5L2.500 3.200z" fill="#444"/></svg>
<div class="t val" style="left:3px;top:4px;letter-spacing:0px">83</div>
</div>
<div class="t lbl" style="left:238px;top:983px;letter-spacing:-0.06px">Недели поставок:</div>
<div class="fld" style="left:461px;top:978px;width:227px;">
<i style="left:204px"></i>
<svg style="left:211px;top:7px" width="10" height="10"><rect x="3.500" y=".5" width="5" height="5" fill="none" stroke="#4a4a4a" stroke-width="1.100"/><path d="M2.200 3.500h-1.700v5h5v-2.300" fill="none" stroke="#4a4a4a" stroke-width="1.100"/></svg>
<i style="left:183px"></i>
<svg style="left:191px;top:10px" width="6" height="4"><path d="M0 0h5L2.500 3.200z" fill="#444"/></svg>
<div class="t val" style="left:3px;top:4px;letter-spacing:0px">5-18</div>
</div>
<div class="t lbl" style="left:238px;top:1017px;letter-spacing:-0.16px">Обработка заказа:</div>
<div class="fld" style="left:461px;top:1012px;width:31px;">
<div class="t val" style="right:2px;top:4px">14</div>
</div>
<div class="a" style="left:238px;top:1046px;width:16px;height:6px;border:1px solid #17a050;border-bottom:none;border-radius:3px 3px 0 0"></div>
<div class="a" style="left:264px;top:1047px;width:14px;height:5px;overflow:hidden"><svg style="left:0;top:0" width="14" height="8" viewBox="264 1047 14 8"><ellipse cx="270.400" cy="1054.500" rx="4.300" ry="5.400" fill="none" stroke="#009646" stroke-width="1.400"/></svg></div>
<div class="t lbl" style="left:698px;top:232px;letter-spacing:-0.05px">Вид номенклатуры:</div>
<div class="fld" style="left:834px;top:227px;width:344px;border-color:transparent">
<i style="left:321px"></i>
<svg style="left:328px;top:7px" width="10" height="10"><rect x="3.500" y=".5" width="5" height="5" fill="none" stroke="#4a4a4a" stroke-width="1.100"/><path d="M2.200 3.500h-1.700v5h5v-2.300" fill="none" stroke="#4a4a4a" stroke-width="1.100"/></svg>
<i style="left:300px"></i>
<svg style="left:308px;top:10px" width="6" height="4"><path d="M0 0h5L2.500 3.200z" fill="#444"/></svg>
</div>
<div class="a" style="left:831px;top:224px;width:350px;height:31px;border:2px solid #f9c70f"></div>
<div class="a" style="left:838px;top:231px;width:126px;height:16px;background:#526ac4"></div>
<div class="t " style="left:838px;top:232px;color:#fff">Горшечные растения</div>
<div class="t lbl" style="left:698px;top:263px;letter-spacing:-0.25px">Тип номенклатуры:</div>
<div class="t val" style="left:834px;top:263px;">Товар</div>
<div class="t lbl" style="left:698px;top:290px;letter-spacing:-0.32px">Характеристики:</div>
<div class="t val" style="left:834px;top:290px;">Не используются</div>
<div class="t lbl" style="left:698px;top:317px;letter-spacing:-0.15px">Серии:</div>
<div class="t val" style="left:834px;top:317px;">Не используются</div>
<div class="t lbl" style="left:698px;top:347px;letter-spacing:0.13px">Группа списка:</div>
<div class="fld" style="left:834px;top:342px;width:344px;">
<i style="left:321px"></i>
<svg style="left:328px;top:7px" width="10" height="10"><rect x="3.500" y=".5" width="5" height="5" fill="none" stroke="#4a4a4a" stroke-width="1.100"/><path d="M2.200 3.500h-1.700v5h5v-2.300" fill="none" stroke="#4a4a4a" stroke-width="1.100"/></svg>
<i style="left:300px"></i>
<svg style="left:308px;top:10px" width="6" height="4"><path d="M0 0h5L2.500 3.200z" fill="#444"/></svg>
<div class="t val" style="left:3px;top:4px;letter-spacing:0px">Бегония клубневая (Begonia x tuberhybrida)</div>
</div>
<div class="t lbl" style="left:698px;top:381px;letter-spacing:0px">Качество:</div>
<div class="fld" style="left:834px;top:376px;width:161px;">
<i style="left:138px"></i>
<svg style="left:146px;top:10px" width="6" height="4"><path d="M0 0h5L2.500 3.200z" fill="#444"/></svg>
<div class="t val" style="left:3px;top:4px;letter-spacing:0px">Новый</div>
</div>
<div class="t lnk" style="left:1005px;top:381px;">Товары другого качества (0)</div>
<div class="cb" style="left:699px;top:438px"></div>
<div class="t lbl" style="left:720px;top:438px;letter-spacing:0px">Упаковки</div>
<div class="t lbl" style="left:698px;top:468px;letter-spacing:0px">Единица хранения:</div>
<div class="fld" style="left:834px;top:463px;width:100px;">
<i style="left:77px"></i>
<div class="t" style="left:83px;top:4px;font-size:11px;color:#555;letter-spacing:-0.2px">...</div>
<div class="t val" style="left:3px;top:4px;letter-spacing:0px">шт</div>
</div>
<div class="t lbl" style="left:698px;top:502px;letter-spacing:-0.09px">Единица для отчетов:</div>
<div class="fld" style="left:834px;top:497px;width:80px;">
<i style="left:57px"></i>
<div class="t" style="left:63px;top:4px;font-size:11px;color:#555;letter-spacing:-0.2px">...</div>
<div class="t val" style="left:3px;top:4px;letter-spacing:0px">шт</div>
</div>
<div class="cb" style="left:699px;top:532px"></div>
<div class="t lbl" style="left:720px;top:532px;letter-spacing:0px">Вес</div>
<div class="cb" style="left:699px;top:558px"></div>
<div class="t lbl" style="left:720px;top:558px;letter-spacing:0px">Объем</div>
<div class="cb" style="left:699px;top:584px"></div>
<div class="t lbl" style="left:720px;top:584px;letter-spacing:-0.3px">Длина</div>
<div class="cb" style="left:699px;top:610px"></div>
<div class="t lbl" style="left:720px;top:610px;letter-spacing:0px">Площадь</div>
<div class="t lbl" style="left:698px;top:667px;letter-spacing:-0.13px">Ставка НДС:</div>
<div class="fld" style="left:834px;top:662px;width:100px;">
<i style="left:77px"></i>
<svg style="left:85px;top:10px" width="6" height="4"><path d="M0 0h5L2.500 3.200z" fill="#444"/></svg>
<div class="t val" style="left:3px;top:4px;letter-spacing:0px">Без НДС</div>
</div>
<div class="cb" style="left:699px;top:697px"></div>
<div class="t lbl" style="left:720px;top:697px;letter-spacing:-0.2px">Учет сертификатов номенклатуры</div>
<div class="t lnk" style="left:698px;top:723px;letter-spacing:-0.04px">Распределение продаж по направлениям деятельности</div>
<div class="a" style="left:1881px;top:224px;width:8px;height:805px;border-radius:4px;background:#d6d6d6"></div>
<div class="a" style="left:1881px;top:298px;width:8px;height:439px;border-radius:4px;background:#9b9b9b"></div>
<svg style="left:1881px;top:209px" width="8" height="6" viewBox="1881 209 8 6" ><path d="M1881.800 214.200h6.400l-3.200-4.300z" fill="#4f4f4f"/></svg>
<svg style="left:1881px;top:1038px" width="8" height="6" viewBox="1881 1038 8 6" ><path d="M1881.800 1038.800h6.400l-3.200 4.300z" fill="#4f4f4f"/></svg>
<div class="a" style="left:0;top:34px;width:4px;height:1040px;background:linear-gradient(90deg,#d2d2d2,#bdbdbd 40%,#b4b6ba 80%,#a9acb3)"></div>
<div class="a" style="left:1912px;top:34px;width:5px;height:1040px;background:linear-gradient(90deg,#a9abaf,#b8b9bb 50%,#c6c6c6)"></div>
<div class="a" style="left:1917px;top:0;width:1px;height:1074px;background:#000"></div>
</body></html>
